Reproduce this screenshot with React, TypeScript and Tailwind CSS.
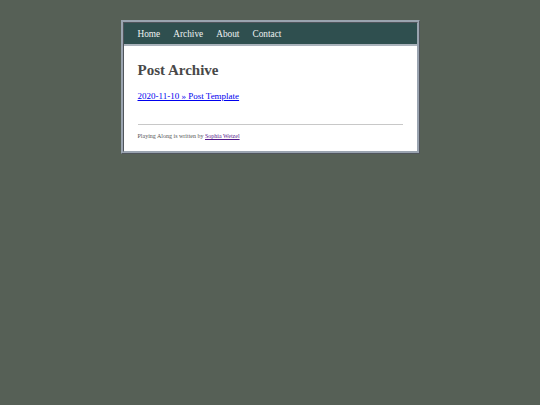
export default function App() {
  const links = ["Home", "Archive", "About", "Contact"]
  return (
    <div className="min-h-[405px] bg-[#566056] pt-5 font-['Liberation_Serif',serif]">
      <div className="mx-auto w-[299px] border-[3px] [border-style:ridge] border-[#9aa4b0]">
        <nav className="flex h-[23px] items-center gap-[13px] bg-[#2f4f4f] px-[14px] pt-[2px] text-[9.3px] text-[#eef2f2] border-b-2 border-[#aab3bc]">
          {links.map((l) => (
            <a key={l} href="#">{l}</a>
          ))}
        </nav>
        <main className="bg-white px-[14px] pt-[17px] pb-[12px]">
          <h1 className="text-[15px] font-bold leading-none text-[#484848]">Post Archive</h1>
          <p className="mt-[14px] text-[9px] leading-none">
            <a href="#" className="text-[#0000ee] underline">2020-11-10 » Post Template</a>
          </p>
          <hr className="mt-[23px] border-t border-[#c8c8c8]" />
          <footer className="mt-[8px] text-[6px] leading-none text-[#555]">
            Playing Along is written by{" "}
            <a href="#" className="text-[#551a8b] underline">Sophia Wetzel</a>
          </footer>
        </main>
      </div>
    </div>
  )
}
